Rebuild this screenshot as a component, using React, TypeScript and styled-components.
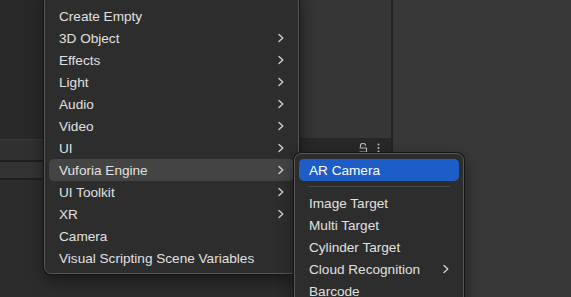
import React from "react";
import styled, { createGlobalStyle } from "styled-components";

const GlobalStyle = createGlobalStyle`
    html, body {
        margin: 0;
        padding: 0;
        background: #383838;
        overflow: hidden;
    }
`;

const Stage = styled.div`
    position: relative;
    width: 571px;
    height: 297px;
    display: flex;
    font-family: "Liberation Sans", Arial, sans-serif;
    overflow: hidden;
`;

const Hierarchy = styled.div`
    width: 298px;
    display: flex;
    flex-direction: column;
    background: #2a2a2a;
`;

const HierarchyTop = styled.div`
    height: 139px;
    background: #282828;
    border-bottom: 1px solid #3a3a3a;
`;

const Strip = styled.div<{ $tone: string; $h: number }>`
    height: ${(p) => p.$h}px;
    background: ${(p) => p.$tone};
    border-bottom: 2px solid #1f1f1f;
`;

const HierarchyRest = styled.div`
    flex: 1;
    background: #2c2c2c;
`;

const Inspector = styled.div`
    width: 92px;
    display: flex;
    flex-direction: column;
    border-left: 1px solid #222;
    border-right: 2px solid #232323;
`;

const InspectorBody = styled.div`
    height: 138px;
    background: linear-gradient(90deg, #303030, #363636 20%);
    border-bottom: 2px solid #262626;
`;

const InspectorBar = styled.div`
    height: 24px;
    background: #282828;
    display: flex;
    justify-content: flex-end;
    align-items: flex-start;
    gap: 9px;
    padding: 3px 11px 0 0;
    border-top-left-radius: 3px;
`;

const InspectorRest = styled.div`
    flex: 1;
    background: #353535;
`;

const Scene = styled.div`
    flex: 1;
    background: #383838;
`;

const Menu = styled.div<{ $left: number; $top: number; $width: number; $height?: number }>`
    position: absolute;
    left: ${(p) => p.$left}px;
    top: ${(p) => p.$top}px;
    width: ${(p) => p.$width}px;
    ${(p) => (p.$height ? `height: ${p.$height}px;` : "")}
    box-sizing: border-box;
    background: #2d2d2d;
    border: 1px solid #575757;
    border-radius: 7px;
    box-shadow: 0 0 0 1px #151515, 0 6px 16px rgba(0, 0, 0, 0.45);
    display: flex;
    flex-direction: column;
`;

const Item = styled.div<{ $active?: "hover" | "select" }>`
    height: 22px;
    flex-shrink: 0;
    display: flex;
    align-items: center;
    justify-content: space-between;
    padding: 0 10px 0 10px;
    border-radius: 5px;
    font-size: 13.6px;
    color: ${(p) => (p.$active === "select" ? "#ffffff" : "#e0e0e0")};
    background: ${(p) =>
        p.$active === "select" ? "#1d5dc7" : p.$active === "hover" ? "#444444" : "transparent"};
    white-space: nowrap;
`;

const Separator = styled.div`
    height: 1px;
    background: #4a4a4a;
    margin: 5px 9px;
    flex-shrink: 0;
`;

const Chevron = () => (
    <svg width="6" height="10" viewBox="0 0 6 10">
        <path d="M1 1.5 L4.8 5 L1 8.5" fill="none" stroke="#d4d4d4" strokeWidth="1.3" strokeLinecap="round" strokeLinejoin="round" />
    </svg>
);

const LockIcon = () => (
    <svg width="10" height="10" viewBox="0 0 10 10">
        <path d="M2.5 4.5 V2.8 a2.5 2.5 0 0 1 5 0" fill="none" stroke="#bdbdbd" strokeWidth="1.1" />
        <path d="M1.5 5 H8.5 V9 H1.5" fill="none" stroke="#bdbdbd" strokeWidth="1.1" />
    </svg>
);

const KebabIcon = () => (
    <svg width="3" height="10" viewBox="0 0 3 10">
        <circle cx="1.5" cy="1.5" r="1" fill="#bdbdbd" />
        <circle cx="1.5" cy="5" r="1" fill="#bdbdbd" />
        <circle cx="1.5" cy="8.5" r="1" fill="#bdbdbd" />
    </svg>
);

type Entry = { label: string; sub?: boolean; active?: "hover" | "select" };

const mainItems: Entry[] = [
    { label: "Create Empty" },
    { label: "3D Object", sub: true },
    { label: "Effects", sub: true },
    { label: "Light", sub: true },
    { label: "Audio", sub: true },
    { label: "Video", sub: true },
    { label: "UI", sub: true },
    { label: "Vuforia Engine", sub: true, active: "hover" },
    { label: "UI Toolkit", sub: true },
    { label: "XR", sub: true },
    { label: "Camera" },
    { label: "Visual Scripting Scene Variables" },
];

const vuforiaItems: Entry[] = [
    { label: "Image Target" },
    { label: "Multi Target" },
    { label: "Cylinder Target" },
    { label: "Cloud Recognition", sub: true },
    { label: "Barcode" },
];

const MainList = styled.div`
    display: flex;
    flex-direction: column;
    padding: 10px 4px 4px;
`;

const SubList = styled.div`
    display: flex;
    flex-direction: column;
    padding: 5px 4px;
`;

const App = () => {
    return (
        <Stage>
            <GlobalStyle />
            <Hierarchy>
                <HierarchyTop />
                <Strip $tone="#303030" $h={20} />
                <Strip $tone="#333333" $h={16} />
                <HierarchyRest />
            </Hierarchy>
            <Inspector>
                <InspectorBody />
                <InspectorBar>
                    <LockIcon />
                    <KebabIcon />
                </InspectorBar>
                <InspectorRest />
            </Inspector>
            <Scene />

            <Menu $left={44} $top={-6} $width={255} $height={280}>
                <MainList>
                    {mainItems.map((it) => (
                        <Item key={it.label} $active={it.active}>
                            <span>{it.label}</span>
                            {it.sub && <Chevron />}
                        </Item>
                    ))}
                </MainList>
            </Menu>

            <Menu $left={294} $top={153} $width={170} $height={170}>
                <SubList>
                    <Item $active="select">
                        <span>AR Camera</span>
                    </Item>
                    <Separator />
                    {vuforiaItems.map((it) => (
                        <Item key={it.label}>
                            <span>{it.label}</span>
                            {it.sub && <Chevron />}
                        </Item>
                    ))}
                </SubList>
            </Menu>
        </Stage>
    );
};

export default App;
